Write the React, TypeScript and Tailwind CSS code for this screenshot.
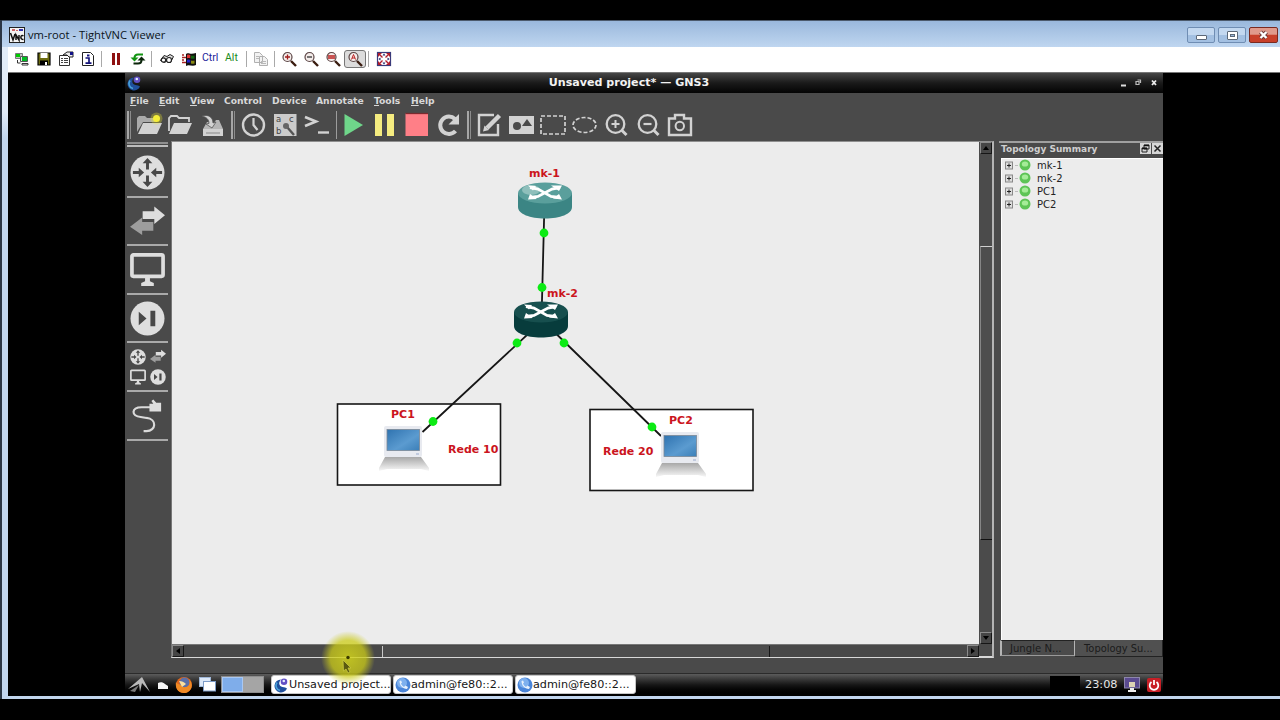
import React from 'react';

const MENU = [
  { label: 'File', width: 'w-[29px]' },
  { label: 'Edit', width: 'w-[31px]' },
  { label: 'View', width: 'w-[34px]' },
  { label: 'Control', width: 'w-[48px]', plain: true },
  { label: 'Device', width: 'w-[44px]', plain: true },
  { label: 'Annotate', width: 'w-[58px]', plain: true },
  { label: 'Tools', width: 'w-[37px]' },
  { label: 'Help', width: 'w-[30px]' },
];

const TREE = ['mk-1', 'mk-2', 'PC1', 'PC2'];

type IconProps = { children: React.ReactNode; className?: string; box?: string };

function Svg({ children, className = 'w-4 h-4', box = '0 0 16 16' }: IconProps) {
  return (
    <svg viewBox={box} className={`shrink-0 ${className}`} fill="none">
      {children}
    </svg>
  );
}

/* ---------- TightVNC window ---------- */

function CaptionButtons() {
  return (
    <div className="flex gap-[3px] pt-[6px] pr-[2px]">
      <div className="w-[28px] h-[16px] rounded-[2px] border border-[#6f8db3] bg-linear-to-b from-[#c3d8f0] from-50% to-[#a3c0e2] to-50% flex justify-center items-end pb-[2px]">
        <div className="w-[11px] h-[5px] rounded-[1px] bg-white border border-[#5c6878]"></div>
      </div>
      <div className="w-[28px] h-[16px] rounded-[2px] border border-[#6f8db3] bg-linear-to-b from-[#c3d8f0] from-50% to-[#a3c0e2] to-50% flex justify-center items-center">
        <div className="w-[11px] h-[9px] rounded-[1px] bg-white border border-[#5c6878] flex items-center justify-center">
          <div className="w-[5px] h-[3px] bg-[#9ab8da] border border-[#5c6878]"></div>
        </div>
      </div>
      <div className="w-[29px] h-[16px] rounded-[2px] border border-[#7a2a20] bg-linear-to-b from-[#e09a8c] from-45% to-[#c8402a] to-50% flex justify-center items-center">
        <Svg className="w-[11px] h-[10px]" box="0 0 11 10">
          <path d="M2.5 2 8.5 8M8.5 2 2.5 8" stroke="#6b3a38" strokeWidth="4" />
          <path d="M2.5 2 8.5 8M8.5 2 2.5 8" stroke="#fff" strokeWidth="2.4" />
        </Svg>
      </div>
    </div>
  );
}

function ViewerTitle() {
  return (
    <div className="h-[27px] shrink-0 flex justify-between bg-linear-to-b from-[#9ab8dc] to-[#bfd6f0] border-t border-[#4c5a6c]">
      <div className="flex items-center pl-[7px] pt-[1px]">
        <Svg className="w-4 h-4">
          <rect x="0.5" y="0.5" width="15" height="15" fill="#f4f4f4" stroke="#222" />
          <path d="M3 2h3v2H3zM7 3h2v1H7z" fill="#c66" />
          <path d="M10 2h4v2h-4z" fill="#33a" />
          <path d="M1.5 6 4 13 6 7M7 13V8l3 5V8M14.5 9c-3-2-4 3.5 0 3.5" stroke="#111" strokeWidth="1.5" />
        </Svg>
        <span className="pl-[3px] font-['Open_Sans',sans-serif] text-[11.2px] leading-none text-[#0b1420] whitespace-nowrap">vm-root - TightVNC Viewer</span>
      </div>
      <CaptionButtons />
    </div>
  );
}

function Magnifier({ sign }: { sign: React.ReactNode }) {
  return (
    <Svg>
      <path d="m10 10 5 5" stroke="#3a1c10" strokeWidth="2.4" />
      <circle cx="6.5" cy="6" r="4.5" fill="#f4ecea" stroke="#5a4444" strokeWidth="1.2" />
      {sign}
    </Svg>
  );
}

function ViewerSeparator() {
  return <div className="w-px h-4 bg-[#a9a9a9]"></div>;
}

function ViewerToolbar() {
  return (
    <div className="h-[26px] shrink-0 bg-white border-b border-[#777] flex items-center pl-[6px] pb-[2px]">
      <div className="flex gap-[6px]">
        <Svg>
          <path d="M1.5 2.5h7v5h-7z" fill="#bdbdbd" stroke="#777" />
          <path d="M2 3h4v3H2z" fill="#0c0" />
          <path d="M6.5 5.5h7v5h-7z" fill="#e4e4e4" stroke="#555" />
          <path d="M8 6h5v4H8z" fill="#0b2" />
          <path d="M3.5 9v3h3M8 12.5h6v1.500H8z" stroke="#333" />
        </Svg>
        <Svg>
          <path d="M2 2h12v12H2z" fill="#6b6b10" stroke="#000" strokeWidth="1.2" />
          <path d="M4.5 2h7v5h-7z" fill="#fff" />
          <path d="M4 9.5h8V14H4z" fill="#000" />
          <path d="M9 11h2v3H9z" fill="#fff" />
        </Svg>
        <Svg>
          <path d="M1.5 4.5h10v10h-10z" fill="#fff" stroke="#333" />
          <path d="M3 7.5h2M6 7.5h4M3 9.5h2M6 9.5h4M3 11.5h2M6 11.5h4" stroke="#444" />
          <path d="M5 4 9 1h6v5h-4L9 4Z" fill="#eee" stroke="#222" />
          <path d="M12 1h3v3h-3z" fill="#118" />
        </Svg>
        <Svg>
          <path d="M2.5 1.5h8l3 3v10h-11z" fill="#fff" stroke="#222" />
          <path d="M7 3.5h2.500v2H7z" fill="#12127a" />
          <path d="M5.500 7H9v5M5.500 12.200h6" stroke="#12127a" strokeWidth="1.7" />
        </Svg>
      </div>
      <div className="pl-[5px] pr-[6px]"><ViewerSeparator /></div>
      <div className="flex gap-[6px]">
        <Svg>
          <path d="M4 2h3v12H4zM9 2h3v12H9z" fill="#8e1010" />
        </Svg>
        <Svg>
          <path d="M13 3.5H8C5.500 3.500 4.500 5 4.500 7" stroke="#119411" strokeWidth="2" />
          <path d="M0.500 6.500h8L4.500 10.500Z" fill="#119411" />
          <path d="M3.500 12.500H8c2.500 0 3.500-1.500 3.500-3.500" stroke="#0b250b" strokeWidth="2" />
          <path d="M15.500 9.500h-8L11.500 5.500Z" fill="#0b250b" />
        </Svg>
      </div>
      <div className="pl-[5px] pr-[7px]"><ViewerSeparator /></div>
      <div className="flex items-center gap-[6px]">
        <Svg>
          <path d="M1.5 9.5 5 4.5l3 1 3-2 3.500 2-3 6-4-1-2.500 1Z" fill="#ddd" stroke="#222" />
          <circle cx="4.5" cy="9" r="2.2" fill="#fff" stroke="#222" strokeWidth="1.2" />
          <circle cx="10" cy="9" r="2.5" fill="#fff" stroke="#222" strokeWidth="1.2" />
        </Svg>
        <Svg>
          <path d="M5 3c2-2 4 1 10-1v12c-4 2-7-1-10 1Z" fill="#111" />
          <path d="M6 4c1-.8 2-.5 3.300 0v3.400c-1-.6-2.300-.6-3.300 0Z" fill="#d33" />
          <path d="M10 4.500c1 .3 2 .3 3.500 0v3c-1 .4-2.500 .4-3.500 0Z" fill="#161" />
          <path d="M6 9c1-.8 2-.5 3.300 0v3c-1-.6-2.300-.6-3.300 0Z" fill="#22c" />
          <path d="M10 9.500c1 .3 2 .3 3.500 0v3c-1 .4-2.500 .4-3.500 0Z" fill="#881" />
          <path d="M1 4h2M1 6.500h4M1 9h2M1 11.500h4" stroke="#a22" strokeWidth="1.5" />
        </Svg>
        <span className="w-4 font-['Roboto',sans-serif] text-[10.5px] leading-none text-[#23239a] -ml-px mr-px">Ctrl</span>
        <span className="w-4 font-['Roboto',sans-serif] text-[10.5px] leading-none text-[#1c8c1c]">Alt</span>
      </div>
      <div className="pl-[5px] pr-[6px]"><ViewerSeparator /></div>
      <Svg>
        <path d="M1.5 1.5h5l3 3v7h-8zM6.5 5.5h5l3 3v6h-8z" fill="#f2f2f2" stroke="#b0b0b0" />
        <path d="M3 5.5h3M3 7.5h3M8 10.5h5M8 12.5h5" stroke="#b8b8b8" />
      </Svg>
      <div className="pl-[5px] pr-[6px]"><ViewerSeparator /></div>
      <div className="flex items-center gap-[6px]">
        <Magnifier sign={<path d="M4 6h5M6.500 3.500v5" stroke="#a11c1c" strokeWidth="1.3" />} />
        <Magnifier sign={<path d="M4 6h5" stroke="#333" strokeWidth="1.3" />} />
        <Magnifier sign={<path d="M3 5h7M3 7h7" stroke="#b22" strokeWidth="1.6" />} />
        <div className="-ml-[3px] w-[22px] h-[18px] rounded-[3px] border border-[#777] bg-[#dcdcdc] flex items-center justify-center">
          <Magnifier sign={<path d="m4.500 8.500 2-5 2 5M5 7h3" stroke="#b22" strokeWidth="1" />} />
        </div>
      </div>
      <div className="pl-[2px] pr-[7px]"><ViewerSeparator /></div>
      <Svg>
        <rect x="1.5" y="1.5" width="13" height="13" fill="#fff" stroke="#3a3a7a" strokeWidth="1.2" />
        <path d="M2 2h4L2 6ZM14 2h-4l4 4ZM2 14h4L2 10ZM14 14h-4l4-4Z" fill="#b11c2c" />
        <path d="m4 4 2.500 2.500M12 4 9.500 6.500M4 12l2.500-2.500M12 12 9.500 9.500" stroke="#b11c2c" strokeWidth="1.4" />
        <path d="m8 2.500 1.500 2h-3ZM8 13.500l1.500-2h-3ZM2.500 8l2-1.500v3ZM13.500 8l-2-1.500v3Z" fill="#23236a" />
      </Svg>
    </div>
  );
}

/* ---------- GNS3 toolbar ---------- */

function Handle({ single }: { single?: boolean }) {
  if (single) {
    return (
      <div className="w-1 h-[28px] flex justify-end">
        <div className="w-[1.5px] h-full bg-[#9c9c9c]"></div>
      </div>
    );
  }
  return (
    <div className="w-2 h-[28px] flex justify-center gap-px">
      <div className="w-[1.5px] h-full bg-[#a6a6a6]"></div>
      <div className="w-[1.5px] h-full bg-[#8c8c8c]"></div>
    </div>
  );
}

function Tool({ children }: { children: React.ReactNode }) {
  return (
    <div className="w-8 flex justify-center">
      <Svg className="w-7 h-7" box="0 0 28 28">{children}</Svg>
    </div>
  );
}

const LIGHT = '#d2d2d2';

function MainToolbar() {
  return (
    <div className="h-[33px] shrink-0 flex items-center">
      <Handle />
      <Tool>
        <path d="M2 21V7l2-2h6l2 2h10v4H8Z" fill="#aaa" />
        <path d="M8 12h19l-5 11H3Z" fill={LIGHT} />
        <circle cx="21.5" cy="7.5" r="6" fill="#f4f02c" opacity="0.3" />
        <circle cx="21.5" cy="7.5" r="3.5" fill="#f5ee3a" />
      </Tool>
      <Tool>
        <path d="M2 20V7l2-2h6l2 2h10v4" stroke={LIGHT} strokeWidth="1.8" />
        <path d="M7 12h18l-5 11H2Z" fill={LIGHT} />
      </Tool>
      <Tool>
        <path d="M8 11 4 18v7h20v-7l-4-9h-3l-3 4-5-2Z" fill="#b6b6b6" />
        <path d="M4 18h20v7H4z" fill={LIGHT} />
        <path d="M3 5c6-2 11 1 11 7l3-1-4 6-6-4 3-.5C10 8 7 6 3 5Z" fill={LIGHT} stroke="#555" strokeWidth="0.8" />
        <path d="M7 22h14" stroke="#888" />
      </Tool>
      <Handle />
      <Tool>
        <circle cx="14.5" cy="14" r="10.5" stroke={LIGHT} strokeWidth="2.4" />
        <path d="M14.5 7v7l4 5" stroke={LIGHT} strokeWidth="2.2" />
      </Tool>
      <Tool>
        <rect x="3" y="3" width="22.5" height="22" fill="#cbcbcb" />
        <path d="m16 16 7 8" stroke="#555" strokeWidth="2.4" />
        <circle cx="15" cy="15" r="3" fill="#666" />
        <g fill="#444" fontFamily="DejaVu Sans" fontSize="8.5">
          <text x="5" y="10.5">a</text>
          <text x="18" y="10.5">c</text>
          <text x="5" y="23">b</text>
        </g>
      </Tool>
      <Tool>
        <path d="m2 6 11 4.500L2 15" stroke={LIGHT} strokeWidth="2.6" />
        <path d="M15 21.500h11" stroke={LIGHT} strokeWidth="2.4" />
      </Tool>
      <Handle single />
      <Tool>
        <path d="M5.500 3v22L24 14Z" fill="#6fd68a" />
      </Tool>
      <Tool>
        <path d="M4 3h7v22H4zM16 3h7v22h-7z" fill="#f5ec80" />
      </Tool>
      <Tool>
        <rect x="2.5" y="2.5" width="22.5" height="22.5" fill="#ff7f87" />
        <path d="M2.5 2.5H25" stroke="#7c2a2e" strokeWidth="1.3" />
      </Tool>
      <Tool>
        <path d="M20.500 20a8.700 8.700 0 1 1-.5-12" stroke={LIGHT} strokeWidth="4" />
        <path d="M24 3v10.500H13.500Z" fill={LIGHT} />
      </Tool>
      <Handle />
      <Tool>
        <path d="M19 4H4v20h19V13" stroke={LIGHT} strokeWidth="2.4" />
        <path d="M24.500 4.500 12 17" stroke={LIGHT} strokeWidth="4.5" />
        <path d="m9.500 14.500-1.500 6 6-1.500Z" fill={LIGHT} />
      </Tool>
      <Tool>
        <path d="M2 5h25v18H2z" fill={LIGHT} />
        <circle cx="10" cy="15" r="4" fill="#4a4a4a" />
        <path d="m20 8 5 7H15Z" fill="#4a4a4a" />
      </Tool>
      <Tool>
        <rect x="2" y="5" width="24" height="18" stroke={LIGHT} strokeWidth="1.7" strokeDasharray="4 2" />
      </Tool>
      <Tool>
        <ellipse cx="13.5" cy="14" rx="11.5" ry="7.5" stroke={LIGHT} strokeWidth="1.7" strokeDasharray="4 2" />
      </Tool>
      <Tool>
        <circle cx="12.5" cy="13" r="8.8" stroke={LIGHT} strokeWidth="2.3" />
        <path d="M8.500 13h8M12.500 9v8" stroke={LIGHT} strokeWidth="2" />
        <path d="m18.500 19 5 5" stroke={LIGHT} strokeWidth="3" />
      </Tool>
      <Tool>
        <circle cx="12.5" cy="13" r="8.8" stroke={LIGHT} strokeWidth="2.3" />
        <path d="M8.500 13h8" stroke={LIGHT} strokeWidth="2.2" />
        <path d="m18.500 19 5 5" stroke={LIGHT} strokeWidth="3" />
      </Tool>
      <Tool>
        <path d="M2 7.500h6V4h9v3.500h7V24H2Z" stroke={LIGHT} strokeWidth="2.4" />
        <circle cx="12.8" cy="15" r="4.2" stroke={LIGHT} strokeWidth="2" />
      </Tool>
    </div>
  );
}

/* ---------- Device sidebar ---------- */

function RouterGlyph() {
  return (
    <>
      <circle cx="18" cy="18" r="17.5" fill="#dedede" />
      <path d="M16.500 15V8.500H13L18 3l5 5.500h-3.500V15ZM16.500 21v6.500H13L18 33l5-5.500h-3.500V21ZM3 16.500h6V13l5.500 5L9 23v-3.500H3ZM33 16.500h-6V13l-5.500 5 5.500 5v-3.500h6Z" fill="#484848" />
    </>
  );
}

function SwitchGlyph() {
  return (
    <>
      <path d="M13 6.500h12V1.500L36 10.500 25 19.500v-5H13Z" fill="#dedede" />
      <path d="M24 17.500H12.500V13L0 22.500 12.500 31v-4.500H24Z" fill="#9d9d9d" />
    </>
  );
}

function MonitorGlyph() {
  return (
    <>
      <rect x="2" y="3" width="32" height="22" rx="1.5" stroke="#dedede" strokeWidth="3.8" />
      <path d="M15.500 26h5v4l4 2v3h-13v-3l4-2Z" fill="#dedede" />
    </>
  );
}

function PlayGlyph() {
  return (
    <>
      <circle cx="18" cy="18" r="17.5" fill="#dedede" />
      <path d="M9 11v14l8-7ZM21 10h5v16h-5z" fill="#484848" />
    </>
  );
}

function SideCell({ children }: { children: React.ReactNode }) {
  return (
    <div className="h-[48.6px] shrink-0 w-[41px] border-b-2 border-[#a9a9a9] flex items-center justify-center">
      {children}
    </div>
  );
}

function Sidebar() {
  return (
    <div className="w-[46px] shrink-0 pl-[2px] flex flex-col">
      <div className="h-[8px] w-[41px] pt-[1px] flex flex-col gap-px shrink-0">
        <div className="h-[2px] bg-[#8f8f8f]"></div>
        <div className="h-[1.5px] bg-[#bdbdbd]"></div>
      </div>
      <SideCell><Svg className="w-[35px] h-[35px]" box="0 0 36 36"><RouterGlyph /></Svg></SideCell>
      <SideCell><Svg className="w-[35px] h-[33px] mt-[2px]" box="0 0 36 34"><SwitchGlyph /></Svg></SideCell>
      <SideCell><Svg className="w-[35px] h-[35px]" box="0 0 36 36"><MonitorGlyph /></Svg></SideCell>
      <SideCell><Svg className="w-[35px] h-[35px]" box="0 0 36 36"><PlayGlyph /></Svg></SideCell>
      <SideCell>
        <div className="grid grid-cols-2 gap-x-[4px] gap-y-[4px]">
          <Svg className="w-[16px] h-[16px]" box="0 0 36 36"><RouterGlyph /></Svg>
          <Svg className="w-[16px] h-[16px]" box="0 0 36 36"><SwitchGlyph /></Svg>
          <Svg className="w-[16px] h-[16px]" box="0 0 36 36"><MonitorGlyph /></Svg>
          <Svg className="w-[16px] h-[16px]" box="0 0 36 36"><PlayGlyph /></Svg>
        </div>
      </SideCell>
      <SideCell>
        <Svg className="w-[35px] h-[35px]" box="0 0 36 36">
          <path d="M21 9.500H12C1 9.500 1 19 11 19.500l6 1c11 1 10 13.500 0 13.500h-3" stroke="#dadada" strokeWidth="2.2" />
          <path d="M20 6h4l-2-3 2-1.500L27 5h5v9H20Z" fill="#dedede" />
        </Svg>
      </SideCell>
    </div>
  );
}

/* ---------- Topology canvas ---------- */

function RouterNode({ side, top, className, shine }: { side: string; top: string; className: string; shine?: boolean }) {
  return (
    <svg viewBox="0 0 54 37" className={`absolute w-[54px] h-[37px] ${className}`}>
      <path d="M0 11v14c0 7 12 11.500 27 11.500S54 32 54 25V11Z" fill={side} />
      <ellipse cx="27" cy="11" rx="27" ry="10.5" fill={top} />
      {shine && <ellipse cx="13" cy="8" rx="9" ry="5" fill="#b9d8d6" opacity="0.55" />}
      <path d="m12 5.500 8 1.500 13 7.500 8 1M42 5.500 34 7 20 14.500l-8 1" stroke="#fff" strokeWidth="2.8" fill="none" />
      <path d="M33 3.500h11L41 9ZM10 3.500l8 .5-3 4.500ZM10 17.500l2-5.500 7 5ZM44 17.500 41 12l-6 4.500Z" fill="#fff" />
    </svg>
  );
}

function PcNode({ className }: { className: string }) {
  return (
    <svg viewBox="0 0 52 46" className={`absolute w-[52px] h-[46px] ${className}`}>
      <defs>
        <linearGradient id="screen" x1="0" y1="0" x2="1" y2="1">
          <stop offset="0" stopColor="#2f73b0" />
          <stop offset="0.6" stopColor="#5b9bd0" />
          <stop offset="1" stopColor="#3b7fb8" />
        </linearGradient>
        <linearGradient id="base" x1="0" y1="0" x2="0" y2="1">
          <stop offset="0" stopColor="#a8a8a8" />
          <stop offset="0.5" stopColor="#d0d0d0" />
          <stop offset="1" stopColor="#f8f8f8" />
        </linearGradient>
      </defs>
      <path d="M7 32h36l8 11v3l-8-2H9l-8 2v-3Z" fill="url(#base)" />
      <rect x="6" y="1" width="38" height="31" rx="2" fill="#e8eaf0" />
      <rect x="9" y="4.5" width="32.5" height="21" fill="url(#screen)" stroke="#7c8896" strokeWidth="0.8" />
      <path d="M38 29h3" stroke="#9ac" strokeWidth="1" />
    </svg>
  );
}

function Topology() {
  const dots = [[372, 91], [370, 145.5], [345, 201], [392, 201], [261, 279.5], [480, 285]];
  const label = "absolute font-['DejaVu_Sans',sans-serif] font-bold text-[11px] leading-[14px] text-[#cb1420] whitespace-nowrap";
  return (
    <div className="relative w-[807px] h-[502px] bg-[#ececec] overflow-hidden">
      <svg viewBox="0 0 807 502" className="absolute inset-0 w-[807px] h-[502px]">
        <rect x="165.5" y="262" width="163" height="81" fill="#fff" stroke="#161616" strokeWidth="1.6" />
        <rect x="418" y="267.5" width="163" height="81" fill="#fff" stroke="#161616" strokeWidth="1.6" />
        <path d="M372.500 60 369.500 178M369 180 250.500 290M369 177 489 294" stroke="#161616" strokeWidth="1.8" />
        {dots.map(([x, y]) => (
          <circle key={`${x}-${y}`} cx={x} cy={y} r="4.4" fill="#0ceb14" />
        ))}
      </svg>
      <RouterNode side="#3b8584" top="#5a9f9c" shine className="left-[346px] top-[40px]" />
      <RouterNode side="#073c3c" top="#174f4e" className="left-[342px] top-[159px]" />
      <PcNode className="left-[206px] top-[283px]" />
      <PcNode className="left-[483px] top-[289px]" />
      <span className={`${label} left-[357px] top-[25px]`}>mk-1</span>
      <span className={`${label} left-[375px] top-[145px]`}>mk-2</span>
      <span className={`${label} left-[219px] top-[266px]`}>PC1</span>
      <span className={`${label} left-[497px] top-[272px]`}>PC2</span>
      <span className={`${label} left-[276px] top-[301px]`}>Rede 10</span>
      <span className={`${label} left-[431px] top-[303px]`}>Rede 20</span>
    </div>
  );
}

function ScrollButton({ d }: { d: string }) {
  return (
    <div className="w-[12px] h-[12px] shrink-0 bg-[#454545] border border-t-[#8b8b8b] border-l-[#8b8b8b] border-b-[#161616] border-r-[#161616] flex items-center justify-center">
      <Svg className="w-2 h-2" box="0 0 8 8"><path d={d} fill="#000" /></Svg>
    </div>
  );
}

function CanvasArea() {
  return (
    <div className="w-[823px] h-[517px] shrink-0 border-l border-b-2 border-r-2 border-t border-l-[#777] border-t-[#8f8f8f] border-b-[#d8d8d8] border-r-[#b4b4b4] flex flex-col">
      <div className="flex">
        <Topology />
        <div className="flex-1 bg-[#4b4b4b] flex flex-col items-center">
          <ScrollButton d="M1 6h6L4 2Z" />
          <div className="h-[92px] shrink-0"></div>
          <div className="h-[294px] w-[12px] shrink-0 border-t border-t-[#d0d0d0] border-l border-l-[#858585] border-b border-b-[#111] bg-[#4d4d4d]"></div>
          <div className="flex-1"></div>
          <ScrollButton d="M1 2h6L4 6Z" />
        </div>
      </div>
      <div className="flex-1 w-[807px] bg-[#484848] border-t border-[#777] flex items-center">
        <ScrollButton d="M6 1v6L2 4Z" />
        <div className="w-[198px] shrink-0"></div>
        <div className="w-[388px] h-[11px] shrink-0 border-l border-l-[#c8c8c8] border-r border-r-[#161616] bg-[#4d4d4d]"></div>
        <div className="flex-1"></div>
        <ScrollButton d="M2 1v6l4-3Z" />
      </div>
    </div>
  );
}

/* ---------- Topology summary dock ---------- */

function Dock() {
  return (
    <div className="w-[164px] ml-[5px] h-[517px] flex flex-col border-t-2 border-[#a0a0a0] font-['DejaVu_Sans',sans-serif]">
      <div className="h-[15px] shrink-0 flex items-center justify-between pl-[2px]">
        <span className="text-[9px] leading-none font-bold text-[#cfcfcf] whitespace-nowrap pb-[2px]">Topology Summary</span>
        <div className="flex gap-px pb-[4px]">
          <div className="w-[11px] h-[11px] bg-[#d6d6d6]">
            <Svg className="w-[11px] h-[11px]" box="0 0 11 11">
              <path d="M4 2h5v4H4zM2 5h5v4H2z" fill="#d6d6d6" stroke="#222" />
              <path d="M4 2.500h5M2 5.500h5" stroke="#111" strokeWidth="1.5" />
            </Svg>
          </div>
          <div className="w-[11px] h-[11px] bg-[#d6d6d6]">
            <Svg className="w-[11px] h-[11px]" box="0 0 11 11">
              <path d="m2.500 2.500 6 6M8.500 2.500l-6 6" stroke="#222" strokeWidth="1.5" />
            </Svg>
          </div>
        </div>
      </div>
      <div className="flex-1 ml-[2px] bg-[#ececec] border-l border-t border-white">
        {TREE.map((name) => (
          <div key={name} className="h-[13px] flex items-center pl-[3px]">
            <Svg className="w-[8px] h-[9px]" box="0 0 8 9">
              <rect x="0.5" y="1" width="7" height="7" fill="#ddd" stroke="#888" />
              <path d="M2 4.500h4M4 2.500v4" stroke="#222" />
            </Svg>
            <div className="w-[3px] ml-[2px] h-px bg-[#bdbdbd]"></div>
            <Svg className="w-[12px] h-[12px] mb-px ml-px" box="0 0 12 12">
              <circle cx="6" cy="6" r="5.5" fill="#5ec456" />
              <ellipse cx="6" cy="5" rx="3.2" ry="2.6" fill="#a5ec98" />
            </Svg>
            <span className="pl-[6px] text-[10px] leading-none text-[#222]">{name}</span>
          </div>
        ))}
      </div>
      <div className="h-[18px] shrink-0 flex items-start ml-[1px] leading-none text-[#1b1b1b]">
        <div className="w-[75px] h-[16px] border-l-2 border-l-[#b5b5b5] border-b border-b-[#999] border-r border-r-[#b5b5b5] border-t border-t-[#222] pl-[8px] pt-[3px] bg-[#4b4b4b] text-[10.1px]">Jungle N...</div>
        <div className="flex-1 h-[17px] border-b border-b-[#222] border-r border-r-[#222] pl-[9px] pt-[4px] bg-[#505050] whitespace-nowrap text-[9.9px]">Topology Su...</div>
      </div>
    </div>
  );
}

/* ---------- LXDE taskbar ---------- */

function TaskButton({ icon, text, width }: { icon: React.ReactNode; text: string; width: string }) {
  return (
    <div className={`${width} h-[19px] shrink-0 rounded-[3px] bg-white border border-[#c6c6c6] flex items-center pl-px whitespace-nowrap`}>
      {icon}
      <span className="text-[11.2px] leading-none text-[#161616]">{text}</span>
    </div>
  );
}

function PuttyIcon() {
  return (
    <Svg className="w-4 h-4">
      <circle cx="8" cy="8" r="7.5" fill="#4a85d8" />
      <circle cx="7" cy="6" r="5" fill="#7eb0ee" />
      <path d="M4.500 4c0 4.500 3 7.500 7.500 8l1-2-2.500-1.500L9 10C7.500 9 6.500 8 6 6.500L7 5.500 6 3.500Z" fill="#e8f1fc" />
    </Svg>
  );
}

function GnsIcon({ className }: { className: string }) {
  return (
    <Svg className={className}>
      <path d="M14 11.500A6.500 6.500 0 1 1 8 2.500c-3 3-2 7 1.500 7.500 2 .3 3.500.5 4.500 1.500Z" fill="#1f4f9c" />
      <path d="M4 5.500c-2 3-1 7 3 8" stroke="#48a0d8" strokeWidth="1.6" />
      <circle cx="11" cy="4.8" r="3.3" fill="#6250c4" />
      <circle cx="10.8" cy="4" r="1.3" fill="#e6ecff" />
    </Svg>
  );
}

function Taskbar() {
  return (
    <div className="h-[23px] shrink-0 bg-linear-to-b from-[#5c5c5c] via-[#161616] to-black border-t border-[#2b2b2b] pb-px flex items-center font-['DejaVu_Sans',sans-serif]">
      <Svg className="w-[22px] h-[16px] ml-[3px]" box="0 0 22 16">
        <path d="M0 12 14 0l8 15-8-9-2 9-1-8Z" fill="#b9b9b9" />
        <path d="m2 14 9-6-4 7Z" fill="#7a7a7a" />
      </Svg>
      <Svg className="w-[11px] h-[8px] ml-[7px]" box="0 0 11 8">
        <path d="M1 2c2-1 5-1 7 1l3 2v3H1Z" fill="#f5f5f5" />
      </Svg>
      <Svg className="w-[18px] h-[18px] ml-[7px]" box="0 0 18 18">
        <circle cx="9" cy="9" r="8" fill="#e0661c" />
        <circle cx="9.5" cy="6.5" r="5" fill="#5b6fa8" />
        <path d="M1 6c1 2 3 2 5 3 1 3 6 3 8 0 1-2 1-4 0-6 6 7 1 14-5 14S0 12 1 6Z" fill="#f08a24" />
        <path d="M4 5c3 0 5 1 7 3l-4 3Z" fill="#fbe0a0" />
      </Svg>
      <Svg className="w-[17px] h-[15px] ml-[6px]" box="0 0 17 15">
        <rect x="0.5" y="0.5" width="11" height="9" fill="#dce8f8" stroke="#9fb7d8" />
        <rect x="4.5" y="4.5" width="12" height="9.5" fill="#fff" stroke="#7d9cc8" />
      </Svg>
      <div className="ml-[5px] flex h-[17px] border border-[#8d8d8d]">
        <div className="w-[21px] bg-[#7fadea] border border-[#a8c8f4]"></div>
        <div className="w-[20px] bg-[#a5a5a5]"></div>
      </div>
      <div className="ml-[7px] flex gap-[2px]">
        <TaskButton width="w-[120px]" icon={<GnsIcon className="w-4 h-4" />} text="Unsaved project..." />
        <TaskButton width="w-[120px]" icon={<PuttyIcon />} text="admin@fe80::2..." />
        <TaskButton width="w-[121px]" icon={<PuttyIcon />} text="admin@fe80::2..." />
      </div>
      <div className="flex-1"></div>
      <div className="w-[30px] h-[17px] bg-black"></div>
      <span className="w-[44px] pl-[5px] text-[11.3px] leading-none text-[#e8e8e8]">23:08</span>
      <Svg className="w-[16px] h-[16px]" box="0 0 16 16">
        <rect x="0.5" y="0.5" width="15" height="10.5" fill="#5a4a90" stroke="#8d86ac" />
        <path d="M5 5h6v5H5z" fill="#dcd2b4" />
        <path d="M6 11h4v2h2v2H4v-2h2Z" fill="#eee" />
      </Svg>
      <Svg className="w-[14px] h-[14px] ml-[7px] mr-[2px]" box="0 0 14 14">
        <rect width="14" height="14" rx="2" fill="#c81f26" />
        <path d="M4.500 4a4.300 4.300 0 1 0 5 0" stroke="#fff" strokeWidth="1.8" />
        <path d="M7 2v5" stroke="#fff" strokeWidth="1.8" />
      </Svg>
    </div>
  );
}

function GnsWindow() {
  return (
    <div className="relative w-[1038px] h-[623px] bg-[#4a4a4a] flex flex-col">
      <div className="h-[20px] shrink-0 flex items-center bg-linear-to-b from-[#474747] via-[#1a1a1a] via-50% to-[#050505]">
        <GnsIcon className="w-[16px] h-[16px] ml-px" />
        <span className="flex-1 pr-[4px] text-center font-['DejaVu_Sans',sans-serif] font-bold text-[11.1px] leading-none text-[#f2f2f2]">Unsaved project* — GNS3</span>
        <Svg className="w-[37px] h-[8px] mr-[6px]" box="0 0 37 8">
          <path d="M1 6.500h5" stroke="#ddd" strokeWidth="2" />
          <path d="M16 2.500h3v3h-3zM17.500 1h3v3" stroke="#bbb" strokeWidth="1.2" />
          <path d="m32 1.500 4 4.500M36 1.500 32 6" stroke="#eee" strokeWidth="1.8" />
        </Svg>
      </div>
      <div className="h-[15px] shrink-0 flex items-center pl-[5px] pt-px font-['DejaVu_Sans',sans-serif] font-bold text-[9.2px] leading-none text-[#d8d8d8]">
        {MENU.map(({ label, width, plain }) => (
          <div key={label} className={width}>
            {plain ? label : <><span className="underline">{label[0]}</span>{label.slice(1)}</>}
          </div>
        ))}
      </div>
      <MainToolbar />
      <div className="flex-1 flex">
        <Sidebar />
        <CanvasArea />
        <Dock />
      </div>
      <Taskbar />
      {/* Click highlight around the pointer */}
      <svg viewBox="0 0 54 54" className="absolute left-[196px] top-[558px] w-[54px] h-[54px]">
        <defs>
          <radialGradient id="click">
            <stop offset="0" stopColor="#d4d61c" stopOpacity="0.85" />
            <stop offset="0.65" stopColor="#cccc18" stopOpacity="0.75" />
            <stop offset="1" stopColor="#c8c820" stopOpacity="0" />
          </radialGradient>
        </defs>
        <circle cx="27" cy="27" r="27" fill="url(#click)" />
        <circle cx="27" cy="26.5" r="1.7" fill="#3a3a00" />
        <path d="m22 29 .5 11 2.500-2 2 4 2-1-2-4h3Z" fill="#5a5a10" stroke="#c8c840" strokeWidth="0.8" />
      </svg>
    </div>
  );
}

export default function App() {
  return (
    <div className="w-[1280px] h-[720px] bg-black pt-5 overflow-hidden">
      <div className="h-[679px] flex flex-col border-l-2 border-[#2c3644]">
        <ViewerTitle />
        <div className="flex-1 flex bg-linear-to-b from-[#e2ecf8] from-10% to-[#c2d6ee] to-14% pl-[6px] pb-[3px]">
          <div className="flex-1 flex flex-col">
            <ViewerToolbar />
            <div className="flex-1 bg-black pl-[117px] flex">
              <GnsWindow />
            </div>
          </div>
        </div>
      </div>
    </div>
  );
}
